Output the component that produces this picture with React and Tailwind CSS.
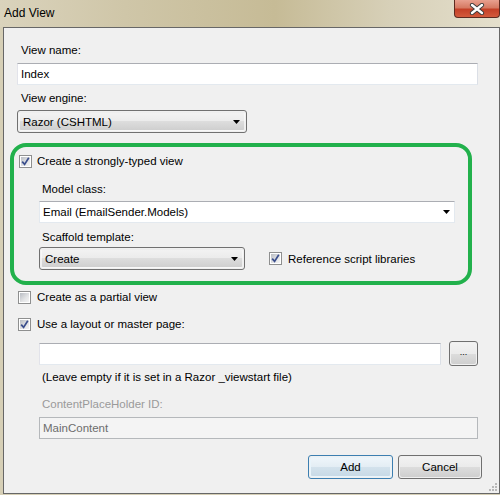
import React from 'react';

const btnBg = 'bg-[linear-gradient(#f2f2f2_0%,#ebebeb_50%,#dddddd_50%,#cfcfcf_100%)]';

const Arrow = () => (
    <svg width="7" height="4" viewBox="0 0 7 4">
        <polygon points="0,0 7,0 3.5,4" fill="#000" />
    </svg>
);

const Check = ({ checked }) => (
    <span className="w-[13px] h-[13px] shrink-0 border border-[#8e8f8f] bg-white p-px flex">
        <span className="flex-1 flex items-center justify-center bg-[linear-gradient(135deg,#b9bdc3_0%,#e3e4e6_60%,#f4f4f4_100%)]">
            {checked && (
                <svg width="9" height="9" viewBox="0 0 9 9">
                    <path d="M1.2 4.6 L3.6 7.4 L7.8 0.8" fill="none" stroke="#3a4e8c" strokeWidth="1.7" />
                </svg>
            )}
        </span>
    </span>
);

const TextBox = ({ className = '', children }) => (
    <div className={`h-[22px] bg-white border border-[#e3e9ef] border-t-[#abadb3] border-l-[#e2e3ea] border-r-[#dbdfe6] flex items-center pl-[3px] ${className}`}>
        {children}
    </div>
);

const Select = ({ className = '', children }) => (
    <div className={`h-[23px] rounded-[3px] border border-[#707070] p-px ${className}`}>
        <div className={`h-full rounded-[2px] border border-[#fbfbfb]/70 ${btnBg} flex items-center justify-between pl-[3px] pr-[4px]`}>
            <span>{children}</span>
            <Arrow />
        </div>
    </div>
);

const CloseButton = () => (
    <div className="w-[46px] h-[18px] rounded-b-[4px] border border-t-0 border-[#5d2a20] bg-[linear-gradient(#e8a08f_0%,#d67a63_45%,#c44027_55%,#d35a3c_100%)] flex items-center justify-center">
        <svg width="16" height="12" viewBox="0 0 16 12">
            <path d="M3 2 L13 10 M13 2 L3 10" stroke="#3a3a3a" strokeWidth="4.2" strokeLinecap="round" />
            <path d="M3 2 L13 10 M13 2 L3 10" stroke="#ffffff" strokeWidth="2.4" strokeLinecap="round" />
        </svg>
    </div>
);

const Grip = () => (
    <svg width="10" height="10" viewBox="0 0 10 10" className="absolute right-[1px] bottom-[1px]">
        {[[8, 2], [8, 5], [5, 5], [8, 8], [5, 8], [2, 8]].map(([x, y], i) => (
            <rect key={i} x={x - 1} y={y - 1} width="2" height="2" fill="#b8b8b8" />
        ))}
    </svg>
);

const App = () => {
    return (
        <div className="w-[500px] h-[495px] bg-[#d6cfb6] flex flex-col overflow-hidden font-['Liberation_Sans',Arial,sans-serif] text-[11.5px] leading-[16px] text-black">
            {/* title bar */}
            <div className="h-[27px] shrink-0 flex items-start justify-between bg-[linear-gradient(90deg,#dad3bc_0%,#cfc6a8_25%,#c6bb96_55%,#d7d0b8_78%,#e4dfcc_100%)]">
                <span className="pl-[4px] pt-[5px] text-[12px]">Add View</span>
                <CloseButton />
            </div>

            {/* dialog body */}
            <div className="relative flex-1 ml-[3px] mb-[1px] border border-[#676767] bg-[#f0f0f0] flex flex-col">
                <span className="mt-[14px] ml-[17px]">View name:</span>
                <TextBox className="mt-[5px] ml-[13px] w-[461px]">Index</TextBox>

                <span className="mt-[5px] ml-[17px]">View engine:</span>
                <Select className="mt-[4px] ml-[13px] w-[230px]">Razor (CSHTML)</Select>

                <div className="mt-[10px] ml-[6px] w-[462px] h-[142px] border-4 border-[#22b14c] rounded-[16px] flex flex-col">
                    <label className="mt-[6px] ml-[5px] flex items-center gap-[5px]">
                        <Check checked />
                        <span>Create a strongly-typed view</span>
                    </label>

                    <span className="mt-[12px] ml-[28px]">Model class:</span>
                    <div className="mt-[4px] ml-[25px] w-[416px] h-[22px] bg-white border border-[#e3e9ef] border-t-[#abadb3] flex items-center justify-between pl-[3px] pr-[4px]">
                        <span>Email (EmailSender.Models)</span>
                        <Arrow />
                    </div>

                    <span className="mt-[6px] ml-[28px]">Scaffold template:</span>
                    <div className="mt-[2px] ml-[25px] flex items-center">
                        <Select className="w-[206px]">Create</Select>
                        <label className="ml-[24px] flex items-center gap-[6px]">
                            <Check checked />
                            <span>Reference script libraries</span>
                        </label>
                    </div>
                </div>

                <label className="mt-[4px] ml-[14px] flex items-center gap-[6px]">
                    <Check />
                    <span>Create as a partial view</span>
                </label>

                <label className="mt-[11px] ml-[14px] flex items-center gap-[6px]">
                    <Check checked />
                    <span>Use a layout or master page:</span>
                </label>

                <div className="mt-[9px] ml-[35px] flex items-center gap-[8px]">
                    <TextBox className="w-[402px]" />
                    <div className="w-[29px] h-[25px] rounded-[3px] border border-[#707070] p-px">
                        <div className={`h-full rounded-[2px] ${btnBg} flex items-center justify-center text-[9px] leading-none pb-[2px]`}>
                            ...
                        </div>
                    </div>
                </div>

                <span className="mt-[3px] ml-[38px]">(Leave empty if it is set in a Razor _viewstart file)</span>

                <span className="mt-[11px] ml-[38px] text-[#9a9a9a]">ContentPlaceHolder ID:</span>
                <div className="mt-[5px] ml-[35px] w-[439px] h-[22px] border border-[#b5b8bb] bg-[#f4f4f4] flex items-center pl-[3px] text-[#6d6d6d]">
                    MainContent
                </div>

                <div className="mt-[16px] pr-[17px] flex justify-end gap-[5px]">
                    <div className="w-[85px] h-[24px] rounded-[3px] border border-[#3c7fb1] p-px">
                        <div className="h-full rounded-[2px] border border-[#e8f4fb] bg-[linear-gradient(#eef5fa_0%,#e3edf4_50%,#d3e2ec_50%,#c8dae7_100%)] flex items-center justify-center">
                            Add
                        </div>
                    </div>
                    <div className="w-[84px] h-[24px] rounded-[3px] border border-[#707070] p-px">
                        <div className={`h-full rounded-[2px] ${btnBg} flex items-center justify-center`}>
                            Cancel
                        </div>
                    </div>
                </div>

                <Grip />
            </div>
        </div>
    );
};

export default App;
